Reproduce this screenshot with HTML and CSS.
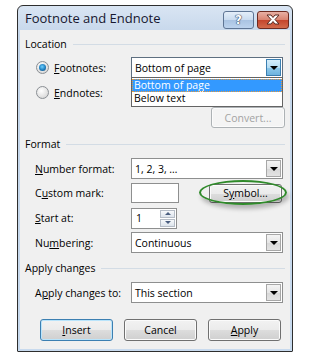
FILE: index.html
```html
<!DOCTYPE html>
<html lang="en">
<head>
  <meta charset="UTF-8">
  <title>Footnote and Endnote</title>
  <link rel="stylesheet" href="styles.css">
</head>
<body>

  <div class="dialog">
    <div class="titlebar">
      <span class="title">Footnote and Endnote</span>
      <div class="caption-buttons">
        <span class="cap help">?</span>
        <span class="cap close">
          <svg width="16" height="11" viewBox="0 0 16 11">
            <path d="M2 1 L6 1 L8 3.5 L10 1 L14 1 L10 5.5 L14 10 L10 10 L8 7.5 L6 10 L2 10 L6 5.5 Z" fill="#fff" stroke="#5a2a22" stroke-width="1" stroke-linejoin="round"/>
          </svg>
        </span>
      </div>
    </div>

    <div class="client">
      <div class="group-head"><span>Location</span><i></i></div>

      <div class="row">
        <label class="radio-label"><span class="radio checked"></span><u>F</u>ootnotes:</label>
        <div class="combo open">
          <span class="combo-text">Bottom of page</span>
          <span class="combo-btn"><b></b></span>
          <ul class="combo-list">
            <li class="selected">Bottom of page</li>
            <li>Below text</li>
          </ul>
        </div>
      </div>

      <div class="row">
        <label class="radio-label"><span class="radio"></span><u>E</u>ndnotes:</label>
      </div>

      <div class="row row-end">
        <span class="btn disabled convert">Convert...</span>
      </div>

      <div class="group-head gap-format"><span>Format</span><i></i></div>

      <div class="row row-first">
        <label class="field-label"><u>N</u>umber format:</label>
        <div class="combo">
          <span class="combo-text">1, 2, 3, …</span>
          <span class="combo-btn"><b></b></span>
        </div>
      </div>

      <div class="row row-short">
        <label class="field-label">C<u>u</u>stom mark:</label>
        <span class="textbox mark"></span>
        <div class="symbol-wrap">
          <span class="btn symbol">S<u>y</u>mbol...</span>
        </div>
      </div>

      <div class="row row-short row-start">
        <label class="field-label"><u>S</u>tart at:</label>
        <div class="textbox spin">
          <span class="spin-text">1</span>
          <span class="spin-btns">
            <span class="spin-up"><b></b></span>
            <span class="spin-down"><b></b></span>
          </span>
        </div>
      </div>

      <div class="row row-num">
        <label class="field-label">Nu<u>m</u>bering:</label>
        <div class="combo">
          <span class="combo-text">Continuous</span>
          <span class="combo-btn"><b></b></span>
        </div>
      </div>

      <div class="group-head gap-apply"><span>Apply changes</span><i></i></div>

      <div class="row row-first">
        <label class="field-label">A<u>p</u>ply changes to:</label>
        <div class="combo">
          <span class="combo-text">This section</span>
          <span class="combo-btn"><b></b></span>
        </div>
      </div>

      <div class="buttons">
        <span class="btn default"><u>I</u>nsert</span>
        <span class="btn">Cancel</span>
        <span class="btn"><u>A</u>pply</span>
      </div>
    </div>
  </div>

</body>
</html>
```

FILE: styles.css
```css
body {
  margin: 0;
  background-color: #fff;
  font-family: 'Open Sans', 'Noto Sans', sans-serif;
  font-size: 10.5px;
  color: #000;
}

u {
  text-decoration: underline;
  text-underline-offset: 1px;
}

.dialog {
  margin: 5px 0 0 17px;
  width: 270px;
  border: 1px solid #2e2e2e;
  border-radius: 6px 6px 1px 1px;
  padding: 0 2px 2px;
  background: linear-gradient(#d9e5f3, #c4d6ea 30px, #c8daee);
}

/* title bar */
.titlebar {
  height: 24px;
  display: flex;
  align-items: center;
  justify-content: space-between;
  padding-left: 5px;
}

.title {
  font-size: 13px;
  color: #17172f;
  margin-top: -1px;
}

.caption-buttons {
  display: flex;
  gap: 3px;
  margin-right: 1px;
  margin-top: 3px;
}

.cap {
  width: 29px;
  height: 16px;
  border: 1px solid #5e7594;
  border-radius: 3px;
  display: flex;
  align-items: center;
  justify-content: center;
}

.help {
  background: linear-gradient(#e4eef9, #c9dbef 50%, #a9c3e2 51%, #bcd3ee);
  color: #fff;
  font-weight: bold;
  font-size: 12px;
  font-family: 'DejaVu Sans', sans-serif;
  text-shadow: 0 0 1px #2c3e5c, 0 0 1px #2c3e5c, 0 0 1px #2c3e5c;
}

.close {
  width: 30px;
  border-color: #6d2a20;
  background: linear-gradient(#e8b0a4, #d9826f 50%, #c4442c 51%, #d26a4c);
}

/* client area */
.client {
  background-color: #f0f0f0;
  padding: 6px 5px 8px 0;
}

.group-head {
  display: flex;
  align-items: center;
  height: 16px;
  padding-left: 5px;
}

.group-head i {
  flex: 1;
  height: 1px;
  margin-left: 6px;
  background-color: #d3dce5;
}

.gap-format {
  margin-top: 8px;
}

.gap-apply {
  margin-top: 7px;
}

.row {
  display: flex;
  align-items: center;
  height: 21px;
  margin-top: 4px;
  padding-left: 15px;
}

.group-head + .row {
  margin-top: 5px;
}

.row-first {
  margin-top: 6px !important;
}

.row-short {
  height: 20px;
}

.row-start {
  margin-top: 5px;
}

.row-end {
  justify-content: flex-end;
}

.field-label {
  width: 96px;
}

.radio-label {
  width: 96px;
  display: flex;
  align-items: center;
}

.radio {
  width: 11px;
  height: 11px;
  border: 1px solid #8a8f94;
  border-radius: 50%;
  margin: 0 5px 0 1px;
  background: radial-gradient(circle at 40% 35%, #ffffff, #e2e2e2 60%, #c9c9c9);
  position: relative;
}

.radio.checked::after {
  content: '';
  position: absolute;
  left: 2px;
  top: 2px;
  width: 7px;
  height: 7px;
  border-radius: 50%;
  background: radial-gradient(circle at 45% 40%, #6fd0ff, #1f7fbf 55%, #0f3c66);
}

/* combo boxes */
.combo {
  position: relative;
  width: 150px;
  height: 19px;
  border: 1px solid #8e8f8f;
  background-color: #fff;
  display: flex;
  align-items: center;
}

.combo-text {
  flex: 1;
  padding-left: 3px;
}

.combo-btn {
  width: 15px;
  height: 17px;
  margin-right: 1px;
  border: 1px solid #a7a7a7;
  box-sizing: border-box;
  background: linear-gradient(#f4f4f4, #e6e6e6 50%, #d7d7d7 51%, #e3e3e3);
  display: flex;
  align-items: center;
  justify-content: center;
}

.combo-btn b {
  border-left: 4px solid transparent;
  border-right: 4px solid transparent;
  border-top: 4px solid #000;
}

.combo.open {
  border-color: #5e6f80;
}

.open .combo-btn {
  border-color: #3c7fb1;
  background: linear-gradient(#d6eefb, #b4dcf3 50%, #8ec8ea 51%, #6db3df);
}

.combo-list {
  position: absolute;
  top: 19px;
  left: -1px;
  width: 150px;
  margin: 0;
  padding: 1px 0;
  list-style: none;
  border: 1px solid #646464;
  background-color: #fff;
  z-index: 2;
}

.combo-list li {
  height: 13px;
  line-height: 13px;
  padding-left: 2px;
}

.combo-list li.selected {
  background-color: #3399ff;
  color: #fff;
  outline: 1px dotted #e89a3a;
  outline-offset: -1px;
}

/* text boxes */
.textbox {
  height: 18px;
  border: 1px solid #8e8f8f;
  background-color: #fff;
}

.mark {
  width: 46px;
}

.spin {
  width: 44px;
  height: 19px;
  display: flex;
  align-items: center;
  justify-content: space-between;
}

.spin-text {
  padding-left: 4px;
}

.spin-btns {
  display: flex;
  flex-direction: column;
  gap: 1px;
  margin-right: 1px;
}

.spin-btns span {
  width: 15px;
  height: 8px;
  border: 1px solid #b5bcc6;
  box-sizing: border-box;
  background: linear-gradient(#f7f9fb, #dde4ec);
  display: flex;
  align-items: center;
  justify-content: center;
}

.spin-up b {
  border-left: 3px solid transparent;
  border-right: 3px solid transparent;
  border-bottom: 3px solid #4a5e80;
}

.spin-down b {
  border-left: 3px solid transparent;
  border-right: 3px solid transparent;
  border-top: 3px solid #4a5e80;
}

/* buttons */
.btn {
  width: 71px;
  height: 19px;
  border: 1px solid #707070;
  border-radius: 3px;
  background: linear-gradient(#f2f2f2, #ebebeb 50%, #dddddd 51%, #cfcfcf);
  display: flex;
  align-items: center;
  justify-content: center;
  box-shadow: inset 0 0 0 1px #fbfbfb;
}

.convert {
  width: 72px;
  color: #a3a3a3;
  border-color: #adb2b5;
  background: #f4f4f4;
}

.symbol-wrap {
  position: relative;
  margin-left: 30px;
}

.symbol {
  height: 17px;
}

.symbol-wrap::after {
  content: '';
  position: absolute;
  left: -10px;
  top: -4px;
  width: 84px;
  height: 21px;
  border: 2px solid #2f8a2a;
  border-radius: 50%;
  box-shadow: 2px 4px 4px rgba(0, 0, 0, 0.25);
}

.buttons {
  display: flex;
  gap: 11px;
  padding-left: 20px;
  margin-top: 16px;
}

.buttons .btn {
  height: 20px;
}

.btn.default {
  border-color: #3c7fb1;
  box-shadow: inset 0 0 0 1px #b9e4fb;
}
```
